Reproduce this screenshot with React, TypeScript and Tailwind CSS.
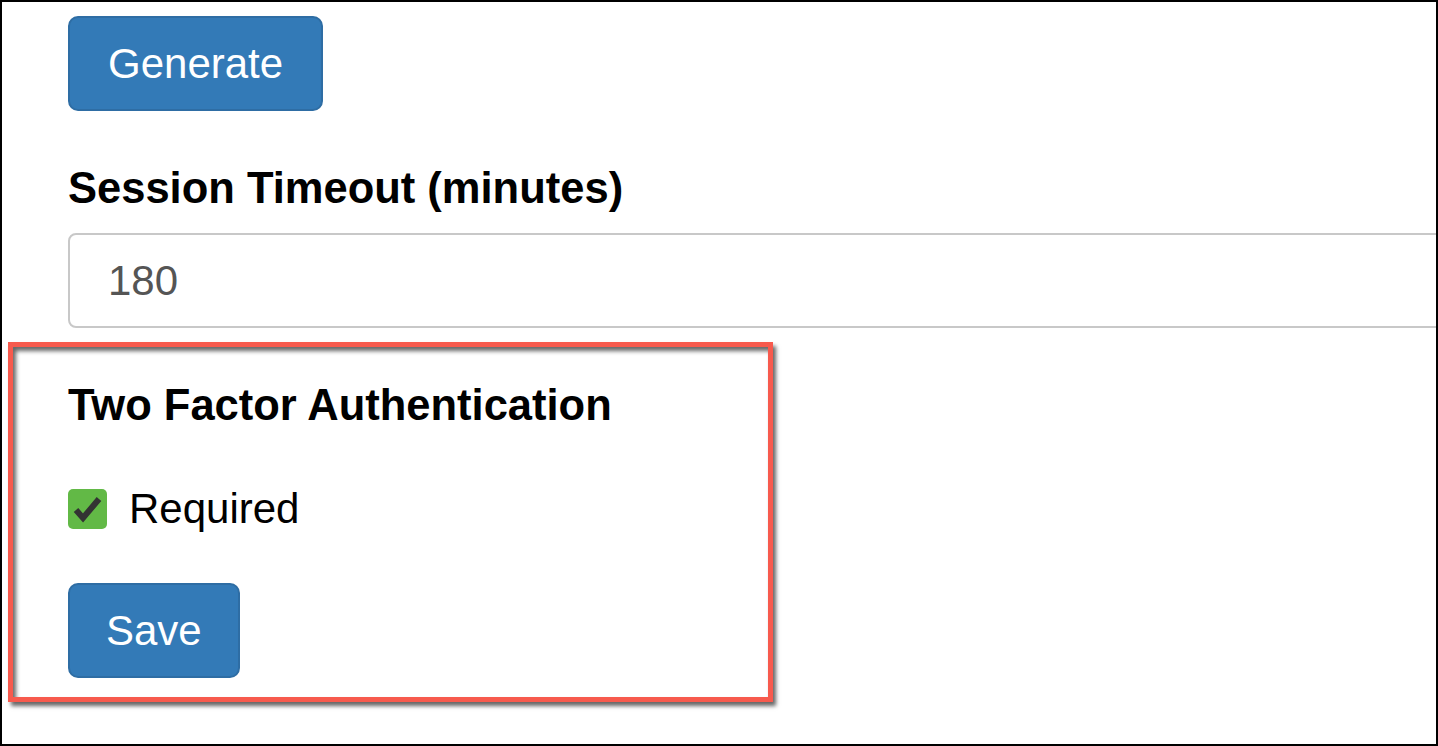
import React from "react";

export default function App() {
  return (
    <div
      className="w-[1438px] h-[746px] border-2 border-black bg-white overflow-hidden pl-[66px] pt-[14px]"
      style={{ fontFamily: '"Liberation Sans", Arial, sans-serif' }}
    >
      <button className="h-[95px] px-[38px] bg-[#337ab7] border-2 border-[#2e6da4] rounded-[10px] text-white text-[42px] leading-none flex items-center">
        Generate
      </button>
      <div className="mt-[53px] text-[43.5px] leading-[48px] font-bold text-black">
        Session Timeout (minutes)
      </div>
      <div className="mt-[21px] w-[1500px] h-[95px] border-2 border-[#c8c8c8] rounded-[8px] pl-[38px] flex items-center text-[42px] text-[#555555]">
        180
      </div>
      <div className="mt-[14px] -ml-[60px] w-[765px] border-[5px] border-[#f75a4d] pl-[55px] pt-[34px] pb-[19px] shadow-[3px_4px_4px_rgba(0,0,0,0.6),inset_3px_4px_4px_rgba(0,0,0,0.6)]">
        <div className="text-[43.5px] leading-[48px] font-bold text-black">
          Two Factor Authentication
        </div>
        <div className="mt-[60px] flex items-center h-[40px]">
          <div className="w-[39px] h-[40px] rounded-[5px] bg-[#62b946] flex items-center justify-center">
            <svg width="39" height="40" viewBox="0 0 39 40">
              <polyline
                points="8,21 15,29 31,10"
                fill="none"
                stroke="#333333"
                strokeWidth="6"
                strokeLinejoin="miter"
              />
            </svg>
          </div>
          <span className="ml-[22px] text-[42px] leading-none text-black">Required</span>
        </div>
        <button className="mt-[54px] h-[95px] px-[36px] bg-[#337ab7] border-2 border-[#2e6da4] rounded-[10px] text-white text-[42px] leading-none flex items-center">
          Save
        </button>
      </div>
    </div>
  );
}
